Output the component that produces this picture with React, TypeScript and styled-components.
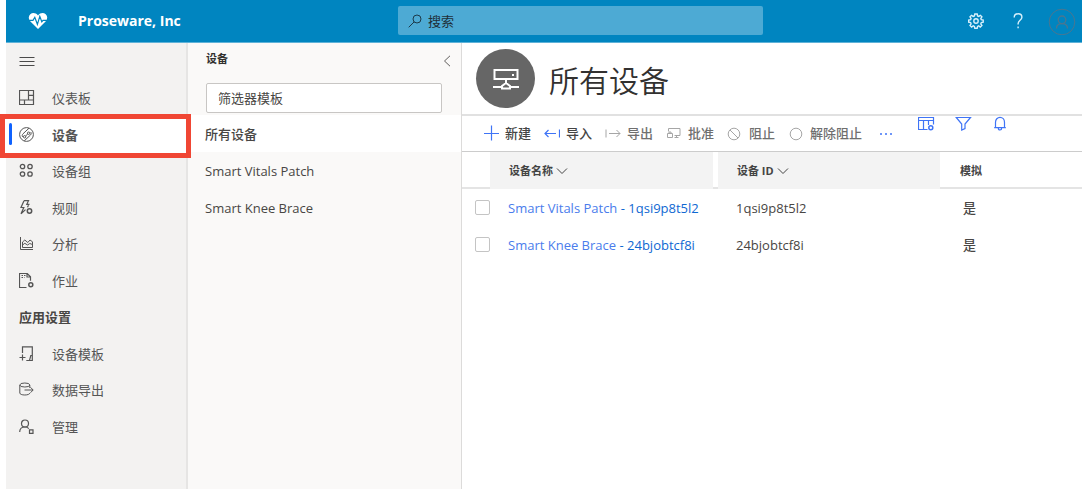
import React from "react";
import styled, { createGlobalStyle } from "styled-components";

const GlobalStyle = createGlobalStyle`
  *, *::before, *::after { box-sizing: border-box; }
  body {
    margin: 0;
    background: #fff;
    color: #3b3a39;
    font-family: "Open Sans", "Noto Sans CJK SC", sans-serif;
    font-size: 13px;
    line-height: 18px;
  }
  button, input { font: inherit; color: inherit; }
  button { border: 0; padding: 0; background: none; cursor: pointer; }
  a { color: inherit; text-decoration: none; }
`;

const Page = styled.div`
  display: flex;
  flex-direction: column;
  min-height: 100vh;
  padding-left: 6px;
`;

const TopBar = styled.header`
  display: grid;
  grid-template-columns: 392px minmax(160px, 365px) 1fr;
  height: 43px;
  background: #0085c0;
  border-bottom: 1px solid #5fb2d8;
`;

const Brand = styled.a`
  display: flex;
  align-items: center;
  gap: 30px;
  padding-left: 22px;
  color: #fff;
  font-size: 14px;
  font-weight: 700;
`;

const SearchBox = styled.label`
  display: flex;
  align-items: center;
  gap: 6px;
  height: 29px;
  margin-top: 6px;
  padding: 0 10px;
  border-radius: 2px;
  background: #4daad4;
  color: #1c3a4a;
`;

const SearchInput = styled.input`
  flex: 1;
  min-width: 0;
  padding: 0;
  border: 0;
  outline: 0;
  background: transparent;
  &::placeholder { color: #1f2f38; opacity: 1; }
`;

const TopActions = styled.div`
  display: flex;
  justify-content: flex-end;
  align-items: center;
  gap: 18px;
  padding-right: 6px;
`;

const TopButton = styled.button<{ $muted?: boolean }>`
  display: flex;
  align-items: center;
  justify-content: center;
  width: ${(p) => (p.$muted ? 28 : 24)}px;
  height: 28px;
  color: ${(p) => (p.$muted ? "#4a7690" : "#d8f0fb")};
`;

const Body = styled.div`
  display: grid;
  grid-template-columns: 182px 274px minmax(0, 1fr);
  flex: 1;
`;

const Sidebar = styled.nav`
  background: #f3f2f1;
  border-right: 2px solid #e6e5e4;
`;

const MenuButton = styled.button`
  display: flex;
  align-items: center;
  height: 37px;
  padding-left: 13px;
  color: #4a4a4a;
`;

const NavList = styled.ul`
  display: grid;
  grid-auto-rows: 36px 37px;
  margin: 0;
  padding: 0;
  list-style: none;
`;

const NavItem = styled.li<{ $selected?: boolean }>`
  position: relative;
  background: ${(p) => (p.$selected ? "#fff" : "transparent")};
  font-weight: ${(p) => (p.$selected ? 700 : 400)};
`;

const NavLink = styled.a`
  display: flex;
  align-items: center;
  gap: 17px;
  height: 100%;
  padding-left: 13px;
  color: #555;
`;

const NavHeading = styled.li`
  display: flex;
  align-items: center;
  padding-left: 13px;
  color: #484644;
  font-weight: 700;
`;

const SelectedBar = styled.span`
  position: absolute;
  top: 7px;
  left: 3px;
  width: 3px;
  height: 22px;
  border-radius: 2px;
  background: #0f62fe;
`;

const Callout = styled.span`
  position: absolute;
  z-index: 2;
  inset: -2px -5px -5px -6px;
  border: 5px solid #f04634;
  pointer-events: none;
`;

const ListPanel = styled.section`
  background: #faf9f8;
  border-right: 1px solid #dcdbda;
`;

const PanelHeader = styled.div`
  display: flex;
  align-items: center;
  justify-content: space-between;
  height: 37px;
  padding: 0 8px 0 18px;
  color: #605e5c;
`;

const PanelTitle = styled.h2`
  margin: 0 0 6px;
  font-size: 11px;
  font-weight: 700;
  color: #323130;
`;

const FilterInput = styled.input`
  display: block;
  width: calc(100% - 37px);
  height: 30px;
  margin: 3px 18px 2px;
  padding: 0 11px;
  border: 1px solid #c8c6c4;
  border-radius: 2px;
  background: #fff;
  &::placeholder { color: #484644; opacity: 1; }
`;

const TemplateLink = styled.a<{ $selected?: boolean }>`
  display: flex;
  align-items: center;
  height: 37px;
  padding-left: 17px;
  color: #484644;
  font-weight: ${(p) => (p.$selected ? 500 : 400)};
  background: ${(p) => (p.$selected ? "#fff" : "transparent")};
`;

const TemplateList = styled.ul`
  margin: 0;
  padding: 0;
  list-style: none;
`;

const Main = styled.main`
  background: #fff;
`;

const TitleRow = styled.div`
  display: flex;
  align-items: center;
  gap: 14px;
  height: 73px;
  padding-left: 14px;
  border-bottom: 2px solid #e1e1e1;
`;

const TitleIcon = styled.span`
  display: flex;
  align-items: center;
  justify-content: center;
  width: 59px;
  height: 59px;
  border-radius: 50%;
  background: #666;
  color: #fff;
`;

const Title = styled.h1`
  margin: 0;
  padding-top: 4px;
  font-size: 30px;
  line-height: 40px;
  font-weight: 350;
  color: #323130;
`;

const Toolbar = styled.div`
  display: flex;
  gap: 13px;
  height: 36px;
  padding-left: 21px;
  border-bottom: 1px solid #ccc;
`;

const ToolButton = styled.button`
  display: flex;
  align-items: center;
  gap: 6px;
  padding-bottom: 2px;
  color: #444;
  font-weight: 500;
  white-space: nowrap;
  svg { color: #3f74f6; }
  &:disabled { color: #6f6f6f; cursor: default; }
  &:disabled svg { color: #a6a6a6; }
`;

const ViewActions = styled.div`
  display: flex;
  align-items: flex-start;
  gap: 20px;
  margin-left: 10px;
`;

const ViewButton = styled.button`
  display: flex;
  width: 17px;
  color: #3f74f6;
`;

const DeviceTable = styled.table`
  width: 100%;
  table-layout: fixed;
  border-collapse: collapse;
`;

const HeadCell = styled.th<{ $width?: number }>`
  width: ${(p) => (p.$width ? `${p.$width}px` : "auto")};
  height: 37px;
  padding: 0;
  text-align: left;
  font-size: 11px;
  font-weight: 700;
  color: #444;
  box-shadow: inset 0 -2px 0 #e4e4e4;
`;

const SortButton = styled.button<{ $gap?: boolean }>`
  display: flex;
  align-items: center;
  gap: 3px;
  width: ${(p) => (p.$gap ? "calc(100% - 5px)" : "100%")};
  height: 37px;
  padding-left: 19px;
  background: #f3f3f3;
`;

const PlainHead = styled.span`
  padding-left: 20px;
`;

const Cell = styled.td`
  height: 37px;
  padding: 0 0 0 18px;
  color: #484644;
  white-space: nowrap;
`;

const SimCell = styled(Cell)`
  padding-left: 23px;
  font-weight: 500;
`;

const CheckCell = styled(Cell)`
  padding-left: 13px;
`;

const Check = styled.input`
  display: block;
  appearance: none;
  width: 15px;
  height: 15px;
  margin: 0;
  border: 1px solid #c4c4c4;
  border-radius: 2px;
  background: #fff;
`;

const DeviceLink = styled.a`
  color: #4a7cec;
`;

const DeviceCode = styled.span`
  color: #0f68d2;
`;

const Glyph = styled.svg`
  flex: none;
`;

type IconProps = { children: React.ReactNode; size?: number };
const Icon = ({ children, size = 16 }: IconProps) => (
  <Glyph
    width={size}
    height={size}
    viewBox={`0 0 ${size} ${size}`}
    fill="none"
    stroke="currentColor"
    strokeWidth="1"
    aria-hidden="true"
  >
    {children}
  </Glyph>
);

const icons = {
  dashboard: <path d="M.5 .5h14v14h-14zM9.500 .5v9.500M.5 10h14M5.500 10v4.500M9.500 5.300h5" strokeWidth="1.200" />,
  devices: (
    <>
      <circle cx="7.500" cy="7.500" r="6.900" />
      <circle cx="9.600" cy="6.200" r="1.200" />
      <circle cx="5.600" cy="9.800" r="1.200" />
      <path d="M10 1.200L4 6.800c-1 1-1 2.300-.2 3.200M5.300 13.800L11.500 8c.8-1 .9-2 .2-3M8.700 7.100L6.500 9" />
    </>
  ),
  groups: (
    <g strokeWidth="1.300">
      <circle cx="3.500" cy="3.500" r="2.200" />
      <circle cx="11" cy="3.500" r="2.200" />
      <circle cx="3.500" cy="11" r="2.200" />
      <circle cx="11" cy="11" r="2.200" />
    </g>
  ),
  rules: (
    <>
      <path d="M9.500 5.200l-1 2M5 .7h4.500L7.800 4.300h2.700M5 .7L2 7.500h2.800L2 13.800l4.500-4.200" strokeWidth="1.200" />
      <circle cx="10.500" cy="11" r="2.200" strokeWidth="1.500" />
    </>
  ),
  analytics: (
    <>
      <path d="M1.500 1v12.500H14" />
      <path d="M3.500 11.500V6l2.300-2 3 2.500L11 4l2.500 1.800v5.700zM3.500 9l2.300-1.700L8.500 9l2.300-1.500 2.700 1" />
    </>
  ),
  jobs: (
    <>
      <path d="M7.500 14.500h-7V.5h7.700l3.300 3.300v4M8 .5v3.500h3.500" strokeWidth="1.200" />
      <path d="M2.500 2.500h4M2.500 4.500h3" strokeDasharray="1.500 1" />
      <circle cx="11.800" cy="11.800" r="2" strokeWidth="1.500" />
    </>
  ),
  templates: <path d="M3.500 7V.8h9.800v13.700h-6M13.300 9.500h-1.500l-1.300 4.800M.5 11.500h6M3.500 8.500v6" strokeWidth="1.200" />,
  exportData: (
    <>
      <ellipse cx="5.800" cy="3" rx="5" ry="2" />
      <path d="M.8 3v8c0 1.200 2.200 2 5 2s5-.8 5-2M10.800 3v3M5.500 8h8.500M11.500 5.300L14.200 8l-2.700 2.700" />
    </>
  ),
  admin: (
    <g strokeWidth="1.200">
      <circle cx="6" cy="4.500" r="3.500" />
      <path d="M.7 13c0-3 2.200-5 5.300-5 1.700 0 3 .6 3.800 1.700M10.500 10.800h3.500v3.500h-3.500z" />
    </g>
  ),
};

const navItems = [
  { label: "仪表板", icon: icons.dashboard },
  { label: "设备", icon: icons.devices, selected: true },
  { label: "设备组", icon: icons.groups },
  { label: "规则", icon: icons.rules },
  { label: "分析", icon: icons.analytics },
  { label: "作业", icon: icons.jobs },
];

const settingsItems = [
  { label: "设备模板", icon: icons.templates },
  { label: "数据导出", icon: icons.exportData },
  { label: "管理", icon: icons.admin },
];

const tools = [
  { label: "新建", enabled: true, icon: <path d="M8.500 .5v15M1 8.500h15" strokeWidth="1.200" /> },
  { label: "导入", enabled: true, icon: <path d="M1 8.500h11M4.500 5L1 8.500 4.500 12M15.500 4.500v8" strokeWidth="1.200" /> },
  { label: "导出", enabled: false, icon: <path d="M4 8.500h11M11.500 5L15 8.500 11.500 12M1 4.500v8" /> },
  {
    label: "批准",
    enabled: false,
    icon: <path d="M2.500 6.500v-3h11.500v7H8.500M1.500 8.500h5v4h-5zM10.500 10.500v2M8.500 12.500h4M3 8.500V7h2v1.500" />,
  },
  {
    label: "阻止",
    enabled: false,
    icon: (
      <>
        <circle cx="7" cy="9" r="5.800" />
        <path d="M3 5l8 8" />
      </>
    ),
  },
  { label: "解除阻止", enabled: false, icon: <circle cx="8" cy="9" r="5.800" /> },
];

const devices = [
  { name: "Smart Vitals Patch", id: "1qsi9p8t5l2", simulated: "是" },
  { name: "Smart Knee Brace", id: "24bjobtcf8i", simulated: "是" },
];

type NavEntryProps = { label: string; icon: React.ReactNode; selected?: boolean };
const NavEntry = ({ label, icon, selected }: NavEntryProps) => (
  <NavItem $selected={selected}>
    {selected && <SelectedBar />}
    <NavLink href="#" aria-current={selected ? "page" : undefined}>
      <Icon>{icon}</Icon>
      {label}
    </NavLink>
    {selected && <Callout />}
  </NavItem>
);

const Chevron = () => (
  <Icon size={12}>
    <path d="M1 3.500l5 5 5-5" />
  </Icon>
);

export default function App() {
  return (
    <Page>
      <GlobalStyle />
      <TopBar>
        <Brand href="#">
          <svg width="20" height="18" viewBox="0 0 20 18" aria-hidden="true">
            <path
              d="M10 17L2.200 9.300C.2 7 .4 4 2.300 2.300 4.500 .4 7.800 .8 10 3.400c2.200-2.600 5.500-3 7.700-1.100 1.900 1.700 2.100 4.700 .1 7z"
              fill="#fff"
            />
            <path d="M1 8.300h4l1.800-3 2.600 7 2.400-8 2 5.500 1.200-1.500h4" fill="none" stroke="#0085c0" strokeWidth="1.200" />
          </svg>
          Proseware, Inc
        </Brand>
        <SearchBox>
          <Icon size={14}>
            <circle cx="9" cy="5" r="4" />
            <path d="M6.200 7.800L.7 13.300" />
          </Icon>
          <SearchInput type="search" placeholder="搜索" aria-label="搜索" />
        </SearchBox>
        <TopActions>
          <TopButton aria-label="设置">
            <Icon>
              <path
                d="M6.800 1h2.400l.4 1.900 1.100 .5 1.700-1.100 1.500 1.500-1.100 1.700 .5 1.200 1.900 .3v2.200l-1.900 .4-.5 1.200 1.100 1.600-1.600 1.600-1.600-1.100-1.100 .5-.4 1.900H6.800l-.4-1.900-1.200-.5-1.600 1.100L2 12.400l1.100-1.600-.5-1.200-1.900-.4V7l1.900-.3 .5-1.200L2 3.800l1.500-1.500 1.700 1.100 1.200-.5z"
                strokeWidth="1.400"
              />
              <circle cx="8" cy="8" r="2.200" strokeWidth="1.400" />
            </Icon>
          </TopButton>
          <TopButton aria-label="帮助">
            <Icon>
              <path
                d="M4.200 4.500c0-2.300 1.600-3.700 3.900-3.700 2.200 0 3.800 1.300 3.800 3.400 0 3-3.800 3.300-3.800 6.500v.8M8.100 13.500v1.700"
                strokeWidth="1.400"
              />
            </Icon>
          </TopButton>
          <TopButton $muted aria-label="帐户">
            <Icon size={28}>
              <circle cx="14" cy="15" r="12.800" />
              <circle cx="14" cy="12.800" r="3.800" strokeWidth="1.300" />
              <path d="M8.500 21.500c0-3 2.300-4.900 5.500-4.900s5.500 1.900 5.500 4.900" strokeWidth="1.300" />
            </Icon>
          </TopButton>
        </TopActions>
      </TopBar>

      <Body>
        <Sidebar>
          <MenuButton aria-label="菜单">
            <Icon>
              <path d="M.5 3.500h15M.5 7.500h15M.5 11.500h15" />
            </Icon>
          </MenuButton>
          <NavList>
            {navItems.map((item) => (
              <NavEntry key={item.label} {...item} />
            ))}
            <NavHeading>应用设置</NavHeading>
            {settingsItems.map((item) => (
              <NavEntry key={item.label} {...item} />
            ))}
          </NavList>
        </Sidebar>

        <ListPanel>
          <PanelHeader>
            <PanelTitle>设备</PanelTitle>
            <button aria-label="折叠">
              <Icon size={12}>
                <path d="M9 .8L3.500 6 9 11.200" />
              </Icon>
            </button>
          </PanelHeader>
          <FilterInput type="text" placeholder="筛选器模板" aria-label="筛选器模板" />
          <TemplateList>
            <li>
              <TemplateLink href="#" $selected>
                所有设备
              </TemplateLink>
            </li>
            {devices.map((d) => (
              <li key={d.name}>
                <TemplateLink href="#">{d.name}</TemplateLink>
              </li>
            ))}
          </TemplateList>
        </ListPanel>

        <Main>
          <TitleRow>
            <TitleIcon>
              <svg
                width="26"
                height="22"
                viewBox="0 0 26 22"
                fill="none"
                stroke="currentColor"
                strokeWidth="2"
                aria-hidden="true"
              >
                <path d="M1.500 2h23v9h-23zM13 11v4M0 19h8M18 19h8M9 20.500v-2.500l4-3 4 3v2.500z" />
                <path d="M20 6v2" />
              </svg>
            </TitleIcon>
            <Title>所有设备</Title>
          </TitleRow>
          <Toolbar>
            {tools.map((t) => (
              <ToolButton key={t.label} disabled={!t.enabled}>
                <Icon>{t.icon}</Icon>
                {t.label}
              </ToolButton>
            ))}
            <ToolButton aria-label="更多">
              <Icon size={20}>
                <path d="M5 11h2M10 11h2M15 11h2" strokeWidth="1.500" />
              </Icon>
            </ToolButton>
            <ViewActions>
              <ViewButton aria-label="列选项">
                <Icon size={17}>
                  <path d="M9.500 13.500h-9v-12h15v7M.5 4.500h15M5.500 4.500v9M10.500 4.500v4.500" strokeWidth="1.200" />
                  <circle cx="12.800" cy="11.800" r="2" strokeWidth="1.500" />
                </Icon>
              </ViewButton>
              <ViewButton aria-label="筛选">
                <Icon size={17}>
                  <path d="M1.300 1.500h14.200L10 8v4.500L6.700 14V8z" strokeWidth="1.200" />
                </Icon>
              </ViewButton>
              <ViewButton aria-label="通知">
                <Icon size={17}>
                  <path
                    d="M3.500 11.500V6.300C3.500 3.500 5.500 1.300 8 1.300s4.500 2.200 4.500 5v5.200M2.200 11.700h11.600M6.300 12c0 1.300 .7 2 1.700 2s1.700-.7 1.700-2"
                    strokeWidth="1.200"
                  />
                </Icon>
              </ViewButton>
            </ViewActions>
          </Toolbar>
          <DeviceTable>
            <thead>
              <tr>
                <HeadCell $width={28} />
                <HeadCell $width={228}>
                  <SortButton $gap>
                    设备名称
                    <Chevron />
                  </SortButton>
                </HeadCell>
                <HeadCell $width={222}>
                  <SortButton>
                    设备 ID
                    <Chevron />
                  </SortButton>
                </HeadCell>
                <HeadCell>
                  <PlainHead>模拟</PlainHead>
                </HeadCell>
              </tr>
            </thead>
            <tbody>
              {devices.map((d) => (
                <tr key={d.id}>
                  <CheckCell>
                    <Check type="checkbox" aria-label={d.name} />
                  </CheckCell>
                  <Cell>
                    <DeviceLink href="#">
                      {d.name} <DeviceCode>- {d.id}</DeviceCode>
                    </DeviceLink>
                  </Cell>
                  <Cell>{d.id}</Cell>
                  <SimCell>{d.simulated}</SimCell>
                </tr>
              ))}
            </tbody>
          </DeviceTable>
        </Main>
      </Body>
    </Page>
  );
}
